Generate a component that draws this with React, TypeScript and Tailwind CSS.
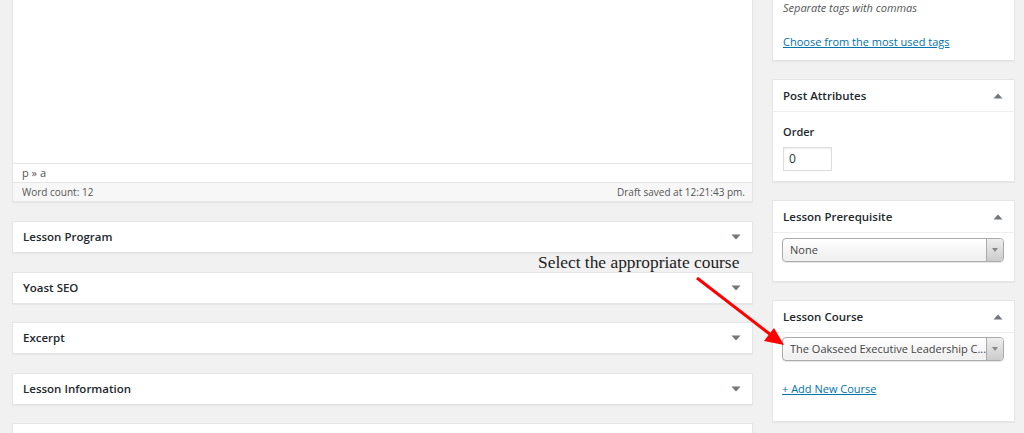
import React from "react";

const font = { fontFamily: '"Open Sans", "Noto Sans", sans-serif' };

function Down() {
  return (
    <svg width="10" height="6" viewBox="0 0 10 6" className="shrink-0">
      <path d="M0.5 0.5 L9.5 0.5 L5 5.5 Z" fill="#72777c" />
    </svg>
  );
}
function Up() {
  return (
    <svg width="10" height="6" viewBox="0 0 10 6" className="shrink-0">
      <path d="M0.5 5.5 L9.5 5.5 L5 0.5 Z" fill="#72777c" />
    </svg>
  );
}

function ClosedBox({ title }: { title: string }) {
  return (
    <div className="h-[32px] bg-white border border-[#e5e5e5] shadow-[0_1px_1px_rgba(0,0,0,0.04)] flex items-center justify-between pl-[10px] pr-[11px]">
      <span className="text-[11.5px] font-semibold text-[#23282d]">{title}</span>
      <Down />
    </div>
  );
}

function SideHeader({ title }: { title: string }) {
  return (
    <div className="h-[32px] border-b border-[#eeeeee] flex items-center justify-between pl-[10px] pr-[11px]">
      <span className="text-[11.5px] font-semibold text-[#23282d]">{title}</span>
      <Up />
    </div>
  );
}

function Select({ value }: { value: string }) {
  return (
    <div className="h-[24px] w-[222px] rounded-[4px] border border-[#aaaaaa] bg-gradient-to-b from-white to-[#eeeeee] flex items-center overflow-hidden shadow-[0_0_3px_white_inset,0_1px_1px_rgba(0,0,0,0.1)]">
      <span className="flex-1 pl-[7px] text-[11px] text-[#444] whitespace-nowrap overflow-hidden">{value}</span>
      <div className="w-[17px] h-full border-l border-[#aaaaaa] bg-gradient-to-b from-[#eeeeee] to-[#cccccc] flex items-center justify-center">
        <svg width="6" height="4" viewBox="0 0 6 4">
          <path d="M0 0 L6 0 L3 4 Z" fill="#888" />
        </svg>
      </div>
    </div>
  );
}

export default function App() {
  return (
    <div className="w-[1024px] h-[433px] overflow-hidden bg-[#f1f1f1] relative" style={font}>
      <div className="flex gap-[19px] pl-[12px]">
        {/* Left column */}
        <div className="w-[741px] flex flex-col">
          <div className="bg-white border border-[#e5e5e5] border-t-0 shadow-[0_1px_1px_rgba(0,0,0,0.04)]">
            <div className="h-[163px]" />
            <div className="h-[19px] border-t border-[#e5e5e5] flex items-center pl-[9px] text-[11px] text-[#555]">
              p » a
            </div>
            <div className="h-[19px] border-t border-[#e5e5e5] bg-[#f7f7f7] flex items-center justify-between pl-[9px] pr-[7px] text-[10px] text-[#555]">
              <span>Word count: 12</span>
              <span>Draft saved at 12:21:43 pm.</span>
            </div>
          </div>
          <div className="flex flex-col gap-[18.5px] mt-[19px]">
            <ClosedBox title="Lesson Program" />
            <ClosedBox title="Yoast SEO" />
            <ClosedBox title="Excerpt" />
            <ClosedBox title="Lesson Information" />
            <ClosedBox title="" />
          </div>
        </div>

        {/* Right column */}
        <div className="w-[243px] flex flex-col gap-[18px]">
          <div className="bg-white border border-[#e5e5e5] border-t-0 shadow-[0_1px_1px_rgba(0,0,0,0.04)] h-[61px] pl-[10px] flex flex-col">
            <span className="text-[11px] italic text-[#555] mt-[0px] leading-[16px]">Separate tags with commas</span>
            <span className="text-[11px] text-[#0073aa] underline mt-[18px] leading-[16px]">Choose from the most used tags</span>
          </div>
          <div className="bg-white border border-[#e5e5e5] shadow-[0_1px_1px_rgba(0,0,0,0.04)] h-[103px]">
            <SideHeader title="Post Attributes" />
            <div className="pl-[10px] pt-[12px]">
              <div className="text-[11px] font-semibold text-[#23282d] leading-[16px]">Order</div>
              <div className="mt-[7px] w-[49px] h-[24px] border border-[#dddddd] shadow-[inset_0_1px_2px_rgba(0,0,0,0.07)] text-[12px] text-[#32373c] flex items-center pl-[5px]">0</div>
            </div>
          </div>
          <div className="bg-white border border-[#e5e5e5] shadow-[0_1px_1px_rgba(0,0,0,0.04)] h-[82px]">
            <SideHeader title="Lesson Prerequisite" />
            <div className="pl-[9px] pt-[5px]">
              <Select value="None" />
            </div>
          </div>
          <div className="bg-white border border-[#e5e5e5] shadow-[0_1px_1px_rgba(0,0,0,0.04)] h-[122px]">
            <SideHeader title="Lesson Course" />
            <div className="pl-[9px] pt-[4px]">
              <Select value="The Oakseed Executive Leadership C..." />
              <div className="mt-[20px] text-[11px] text-[#0073aa] underline">+ Add New Course</div>
            </div>
          </div>
        </div>
      </div>

      {/* Annotation */}
      <div
        className="absolute left-[538px] top-[249px] text-[17.4px] text-[#222] whitespace-nowrap"
        style={{ fontFamily: '"Liberation Serif", serif' }}
      >
        Select the appropriate course
      </div>
      <svg className="absolute left-0 top-0" width="1024" height="433">
        <line x1="697" y1="278" x2="771" y2="335" stroke="#ff0000" strokeWidth="3" />
        <path d="M784 345 L764 341 L774 328 Z" fill="#ff0000" />
      </svg>
    </div>
  );
}
